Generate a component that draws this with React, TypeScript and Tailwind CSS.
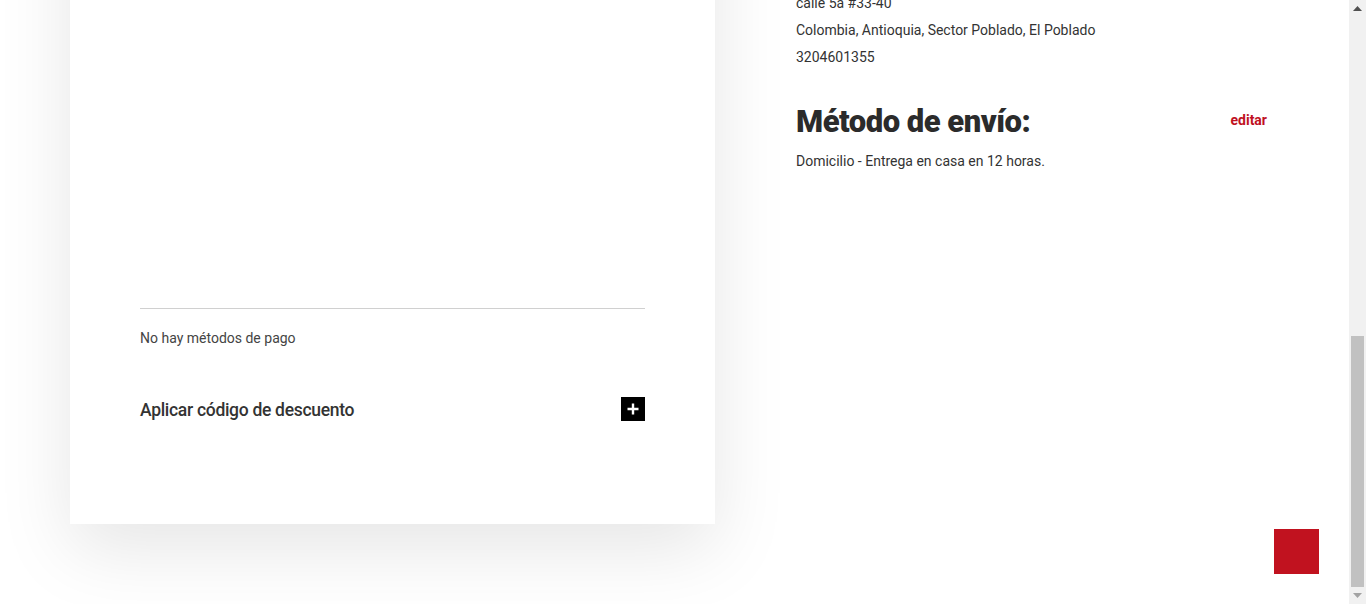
import { useLayoutEffect } from 'react';

const body = "font-['Roboto','Liberation_Sans',sans-serif]";

export default function App() {
  // la vista está desplazada hasta el final de la página
  useLayoutEffect(() => {
    window.scrollTo(0, document.documentElement.scrollHeight);
  }, []);

  return (
    <div className={`${body} bg-white text-[#333] pt-[100px] pb-[80px]`}>
      <div className="flex">
        {/* tarjeta de pago */}
        <div className="ml-[70px] w-[645px] h-[1192px] bg-white shadow-[0_25px_70px_rgba(0,0,0,0.1)] px-[70px] pt-[70px] flex flex-col">
          <h2 className="text-[31px] leading-[36px] font-black tracking-[-0.5px] text-[#2b2b2b]">Método de pago:</h2>
          <div className="mt-auto border-t border-[#d0d0d0]">
            <p className="pt-[19px] text-sm leading-[20px] text-[#444]">No hay métodos de pago</p>
            <div className="mt-[49px] flex items-center justify-between h-[24px] mb-[103px]">
              <span className="text-[17.5px] font-medium text-[#333] tracking-[-0.3px] pt-[2px]">Aplicar código de descuento</span>
              <button className="w-6 h-6 bg-black flex items-center justify-center">
                <svg width="12" height="12" viewBox="0 0 12 12">
                  <path d="M6 0.5v11M0.5 6h11" stroke="#fff" strokeWidth="2.4" />
                </svg>
              </button>
            </div>
          </div>
        </div>

        {/* resumen de envío */}
        <div className="ml-[81px] w-[471px] pt-[555px]">
          <div className="flex items-center justify-between h-[36px]">
            <h2 className="text-[31px] leading-[36px] font-black tracking-[-0.5px] text-[#2b2b2b]">Dirección de envío:</h2>
            <a className="text-sm font-bold text-[#c0111f]">editar</a>
          </div>
          <div className="mt-[40px] text-sm leading-[27px] text-[#333]">
            <p>Laura Restrepo</p>
            <p>calle 5a #33-40</p>
            <p>Colombia, Antioquia, Sector Poblado, El Poblado</p>
            <p>3204601355</p>
          </div>
          <div className="mt-[32.5px] flex items-center justify-between h-[36px]">
            <h2 className="text-[31px] leading-[36px] font-black tracking-[-0.5px] text-[#2b2b2b]">Método de envío:</h2>
            <a className="text-sm font-bold text-[#c0111f] -mt-[4px]">editar</a>
          </div>
          <p className="mt-[8.5px] text-sm leading-[27px] text-[#333]">Domicilio - Entrega en casa en 12 horas.</p>
        </div>
      </div>

      {/* botón volver arriba */}
      <button className="fixed right-[47px] bottom-[30px] w-[45px] h-[45px] bg-[#c1121f]" />

      {/* barra de desplazamiento */}
      <div className="fixed top-0 right-0 w-[17px] h-screen bg-[#f1f1f1] flex flex-col items-center">
        <div className="h-[17px] flex items-center justify-center">
          <svg width="9" height="5" viewBox="0 0 9 5"><path d="M4.5 0L9 5H0z" fill="#505050" /></svg>
        </div>
        <div className="flex-1 w-full flex flex-col justify-end px-[2px]">
          <div className="h-[251px] bg-[#c1c1c1]" />
        </div>
        <div className="h-[17px] flex items-center justify-center">
          <svg width="9" height="5" viewBox="0 0 9 5"><path d="M0 0h9L4.5 5z" fill="#a3a3a3" /></svg>
        </div>
      </div>
    </div>
  );
}
